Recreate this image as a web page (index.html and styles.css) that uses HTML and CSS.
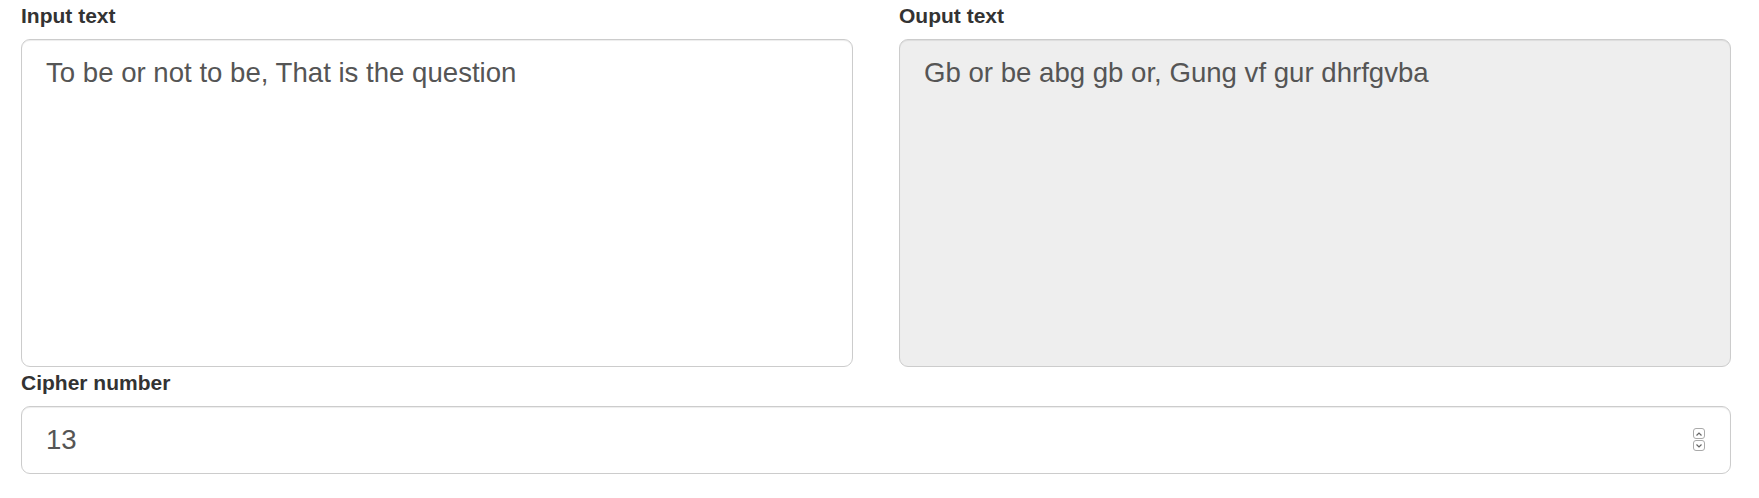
FILE: index.html
```html
<!DOCTYPE html>
<html lang="en">
<head>
<meta charset="utf-8">
<title>Caesar cipher</title>
<link rel="stylesheet" href="styles.css">
</head>
<body>
<main class="page">
  <div class="row">
    <div class="field">
      <label class="label" for="in">Input text</label>
      <textarea id="in" class="control area">To be or not to be, That is the question</textarea>
    </div>
    <div class="field">
      <label class="label" for="out">Ouput text</label>
      <textarea id="out" class="control area readonly" readonly>Gb or be abg gb or, Gung vf gur dhrfgvba</textarea>
    </div>
  </div>
  <div class="field field-num">
    <label class="label" for="num">Cipher number</label>
    <div class="num-wrap">
      <input id="num" class="control num" type="text" value="13">
      <span class="spinner" aria-hidden="true">
        <span class="spin-btn">
          <svg width="8" height="6" viewBox="0 0 8 6"><path d="M1.5 4.5 L4 2 L6.5 4.5" fill="none" stroke="#666" stroke-width="1.2"/></svg>
        </span>
        <span class="spin-btn">
          <svg width="8" height="6" viewBox="0 0 8 6"><path d="M1.5 1.5 L4 4 L6.5 1.5" fill="none" stroke="#666" stroke-width="1.2"/></svg>
        </span>
      </span>
    </div>
  </div>
</main>
</body>
</html>
```
FILE: styles.css
```css
html, body {
  margin: 0;
  padding: 0;
  background: #fff;
}

body {
  font-family: "Liberation Sans", Arial, Helvetica, sans-serif;
  color: #333;
}

.page {
  padding: 1px 28px 0 21px;
}

.row {
  display: grid;
  grid-template-columns: 1fr 1fr;
  column-gap: 46px;
}

.field {
  display: flex;
  flex-direction: column;
}

.field-num {
  margin-top: 1px;
}

.label {
  font-size: 21px;
  font-weight: bold;
  line-height: 30px;
  margin-bottom: 8px;
}

.control {
  box-sizing: border-box;
  display: block;
  width: 100%;
  margin: 0;
  font-family: "Liberation Sans", Arial, Helvetica, sans-serif;
  font-size: 27.6px;
  line-height: 36px;
  color: #555;
  background: #fff;
  border: 1px solid #ccc;
  border-radius: 9px;
  box-shadow: inset 0 1px 1px rgba(0, 0, 0, 0.075);
  outline: none;
}

.area {
  height: 328px;
  padding: 15px 24px;
  resize: none;
  overflow: hidden;
}

.readonly {
  background: #eee;
}

.num-wrap {
  position: relative;
}

.num {
  height: 68px;
  padding: 0 24px;
}

.spinner {
  position: absolute;
  right: 26px;
  top: 22px;
  display: flex;
  flex-direction: column;
  gap: 1px;
}

.spin-btn {
  box-sizing: border-box;
  width: 12px;
  height: 11px;
  border: 1px solid #aaa;
  border-radius: 3px;
  display: flex;
  align-items: center;
  justify-content: center;
  background: #fff;
}

.spin-btn svg {
  display: block;
}
```
